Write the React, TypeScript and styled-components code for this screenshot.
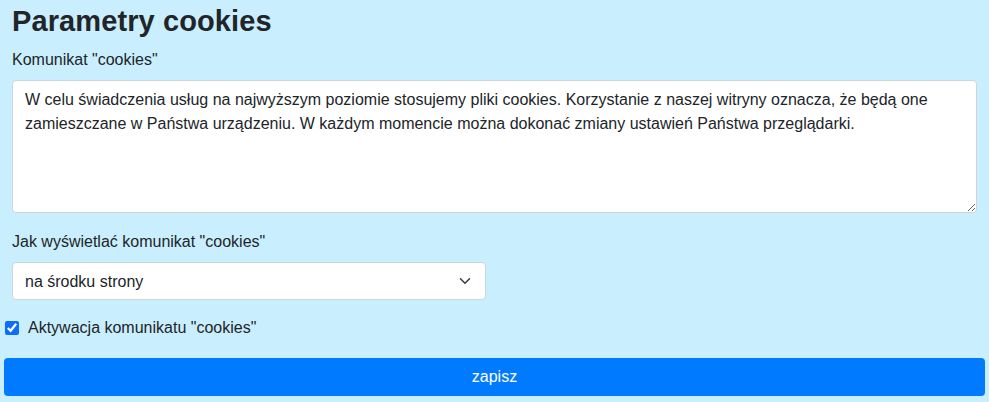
import React, { useState } from 'react'
import styled, { createGlobalStyle } from 'styled-components'

const GlobalStyle = createGlobalStyle`
  html, body {
    margin: 0;
    padding: 0;
    background: #c9eefd;
  }
  body {
    font-family: 'Liberation Sans', Arial, sans-serif;
    color: #212529;
    font-size: 16px;
  }
`

const Page = styled.div`
  width: 989px;
  box-sizing: border-box;
  padding: 4px 4px 6px;
`

const Section = styled.div`
  padding: 0 8px;
  display: flex;
  flex-direction: column;
`

const Title = styled.h1`
  margin: 0 0 10px;
  font-size: 29px;
  line-height: 34px;
  font-weight: 700;
  letter-spacing: 0.1px;
  color: #212529;
`

const Label = styled.label`
  display: block;
  font-size: 16px;
  line-height: 24px;
  margin-bottom: 8px;
`

const TextArea = styled.textarea`
  box-sizing: border-box;
  width: 100%;
  height: 133px;
  padding: 7px 12px;
  border: 1px solid #ced4da;
  border-radius: 4px;
  background: #fff;
  font-family: 'Liberation Sans', Arial, sans-serif;
  font-size: 16px;
  line-height: 24px;
  color: #212529;
  resize: vertical;
  margin-bottom: 17px;
  outline: none;
`

const SelectWrap = styled.div`
  position: relative;
  width: 474px;
  height: 38px;
`

const Select = styled.select`
  appearance: none;
  box-sizing: border-box;
  width: 100%;
  height: 100%;
  padding: 0 36px 0 12px;
  border: 1px solid #ced4da;
  border-radius: 4px;
  background: #fff;
  font-family: 'Liberation Sans', Arial, sans-serif;
  font-size: 16px;
  color: #212529;
  outline: none;
`

const Chevron = styled.svg`
  position: absolute;
  right: 15px;
  top: 15px;
  pointer-events: none;
`

const CheckRow = styled.label`
  display: flex;
  align-items: center;
  gap: 9px;
  margin: 16px 0 18px 1px;
  font-size: 16px;
  line-height: 24px;
`

const Check = styled.input`
  width: 14px;
  height: 14px;
  margin: 0;
  accent-color: #0b6efd;
`

const SaveButton = styled.button`
  display: block;
  width: 981px;
  height: 38px;
  border: none;
  border-radius: 4px;
  background: #007bff;
  color: #fff;
  font-family: 'Liberation Sans', Arial, sans-serif;
  font-size: 16px;
  cursor: pointer;
`

const message =
  'W celu świadczenia usług na najwyższym poziomie stosujemy pliki cookies. Korzystanie z naszej witryny oznacza, że będą one zamieszczane w Państwa urządzeniu. W każdym momencie można dokonać zmiany ustawień Państwa przeglądarki.'

const App: React.FC = () => {
  const [text, setText] = useState(message)
  const [active, setActive] = useState(true)

  return (
    <Page>
      <GlobalStyle />
      <Section>
        <Title>Parametry cookies</Title>
        <Label htmlFor="msg">Komunikat "cookies"</Label>
        <TextArea id="msg" value={text} onChange={(e) => setText(e.target.value)} />
        <Label htmlFor="pos">Jak wyświetlać komunikat "cookies"</Label>
        <SelectWrap>
          <Select id="pos" defaultValue="middle">
            <option value="middle">na środku strony</option>
            <option value="bottom">na dole strony</option>
            <option value="top">na górze strony</option>
          </Select>
          <Chevron width="12" height="8" viewBox="0 0 12 8">
            <path d="M1.5 1.8l4.5 4.4 4.5-4.4" fill="none" stroke="#343a40" strokeWidth="1.5" strokeLinecap="round" strokeLinejoin="round" />
          </Chevron>
        </SelectWrap>
      </Section>
      <CheckRow>
        <Check type="checkbox" checked={active} onChange={() => setActive(!active)} />
        Aktywacja komunikatu "cookies"
      </CheckRow>
      <SaveButton>zapisz</SaveButton>
    </Page>
  )
}

export default App
